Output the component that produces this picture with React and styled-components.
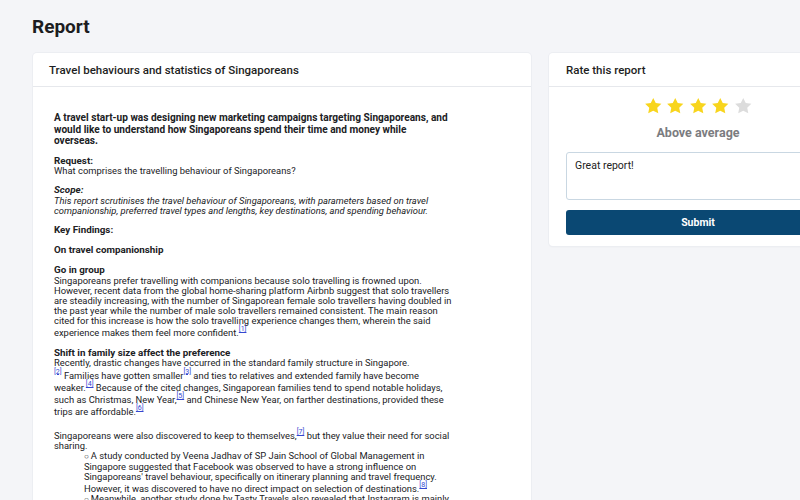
import React, { useState } from "react";
import styled, { createGlobalStyle } from "styled-components";

const GlobalStyle = createGlobalStyle`
  html, body {
    margin: 0;
    padding: 0;
    background: #f4f5f8;
    overflow: hidden;
  }
  body {
    font-family: Roboto, "Liberation Sans", Arial, sans-serif;
    color: #1d1e22;
  }
`;

const Page = styled.div`
  width: max-content;
  padding: 15px 33px 0;
`;

const Title = styled.h1`
  margin: 0 0 14px -1px;
  font-size: 19px;
  line-height: 24px;
  font-weight: 700;
  color: #1c1d21;
`;

const Columns = styled.div`
  display: grid;
  grid-template-columns: 498px 298px;
  gap: 18px;
  align-items: start;
`;

const Card = styled.section`
  background: #fff;
  border-radius: 4px;
  box-shadow: 0 0 0 1px #eceef2, 0 1px 2px rgba(20, 30, 60, 0.05);
`;

const CardHeader = styled.header`
  height: 34px;
  padding: 1px ${(p) => p.$pad || 16}px 0;
  box-sizing: border-box;
  display: flex;
  align-items: center;
  border-bottom: 1px solid #e6e8ec;
  font-size: 11.5px;
  font-weight: 500;
  color: #1d1e22;
`;

const ReportBody = styled.div`
  padding: 25px 21px 40px;
  font-size: 9.4px;
  line-height: 10px;
  color: #202124;
`;

const Content = styled.div`
  max-width: 430px;
  white-space: nowrap;
`;

const Lead = styled.p`
  margin: 0 0 9px;
  font-size: 10.1px;
  line-height: 11.6px;
  font-weight: 700;
`;

const Block = styled.div`
  margin: 0 0 ${(p) => p.$gap ?? 9}px;
`;

const Label = styled.div`
  font-weight: 700;
  font-size: 9.8px;
  line-height: 10.6px;
  font-style: ${(p) => (p.$italic ? "italic" : "normal")};
`;

const Text = styled.div`
  font-style: ${(p) => (p.$italic ? "italic" : "normal")};
`;

const Ref = styled.sup`
  font-size: 7px;
  line-height: 7px;
  vertical-align: 5.1px;
  color: #3347d1;
  text-decoration: underline;
  text-decoration-thickness: 0.5px;
`;

const SubList = styled.ul`
  list-style: none;
  margin: 0;
  padding: 0 0 0 30px;
`;

const SubItem = styled.li`
  &::before {
    content: "○ ";
    font-size: 8px;
  }
`;

const RateBody = styled.div`
  padding: 10px 17px 11px;
  display: flex;
  flex-direction: column;
  align-items: stretch;
`;

const Stars = styled.div`
  display: flex;
  justify-content: center;
  gap: 4px;
`;

const StarButton = styled.button`
  border: 0;
  background: none;
  padding: 0;
  width: 18.5px;
  height: 18px;
  cursor: pointer;
  color: ${(p) => (p.$on ? "#f8d51d" : "#dcdcdc")};
  svg {
    display: block;
    width: 18.5px;
    height: 18px;
  }
`;

const RatingLabel = styled.div`
  margin: 10px 0 12px;
  text-align: center;
  font-size: 12.5px;
  font-weight: 700;
  color: #7b7c80;
`;

const Feedback = styled.textarea`
  box-sizing: border-box;
  height: 48px;
  margin: 0;
  padding: 7px 8px;
  resize: none;
  border: 1px solid #c9d7e2;
  border-radius: 3px;
  font-family: Roboto, "Liberation Sans", Arial, sans-serif;
  font-size: 10.5px;
  line-height: 12px;
  color: #222;
  outline: none;
`;

const Submit = styled.button`
  margin-top: 10px;
  height: 25px;
  border: 0;
  border-radius: 3px;
  background: #0a4873;
  color: #fff;
  font-family: Roboto, "Liberation Sans", Arial, sans-serif;
  font-size: 10.5px;
  font-weight: 700;
  cursor: pointer;
`;

const Star = () => (
  <svg viewBox="0 0 24 24" aria-hidden="true">
    <path
      fill="currentColor"
      d="M12 1.2l3.3 6.9 7.5 1-5.5 5.2 1.4 7.5L12 18.2l-6.7 3.6 1.4-7.5L1.2 9.1l7.5-1z"
    />
  </svg>
);

// keeps the line breaks of the original report layout
const Lines = ({ children }) =>
  React.Children.toArray(children).flatMap((line, i) =>
    i === 0 ? [line] : [<br key={`br${i}`} />, line]
  );

const labels = ["Poor", "Below average", "Average", "Above average", "Excellent"];

export default function App() {
  const [rating, setRating] = useState(4);
  const [comment, setComment] = useState("Great report!");

  return (
    <>
      <GlobalStyle />
      <Page>
        <Title>Report</Title>
        <Columns>
          <Card>
            <CardHeader>Travel behaviours and statistics of Singaporeans</CardHeader>
            <ReportBody>
              <Content>
                <Lead>
                  <Lines>
                    <span>A travel start-up was designing new marketing campaigns targeting Singaporeans, and</span>
                    <span>would like to understand how Singaporeans spend their time and money while</span>
                    <span>overseas.</span>
                  </Lines>
                </Lead>
                <Block>
                  <Label>Request:</Label>
                  <Text>What comprises the travelling behaviour of Singaporeans?</Text>
                </Block>
                <Block>
                  <Label $italic>Scope:</Label>
                  <Text $italic>
                    <Lines>
                      <span>This report scrutinises the travel behaviour of Singaporeans, with parameters based on travel</span>
                      <span>companionship, preferred travel types and lengths, key destinations, and spending behaviour.</span>
                    </Lines>
                  </Text>
                </Block>
                <Block>
                  <Label>Key Findings:</Label>
                </Block>
                <Block $gap={10}>
                  <Label>On travel companionship</Label>
                </Block>
                <Block $gap={10}>
                  <Label>Go in group</Label>
                  <Text>
                    <Lines>
                      <span>Singaporeans prefer travelling with companions because solo travelling is frowned upon.</span>
                      <span>However, recent data from the global home-sharing platform Airbnb suggest that solo travellers</span>
                      <span>are steadily increasing, with the number of Singaporean female solo travellers having doubled in</span>
                      <span>the past year while the number of male solo travellers remained consistent. The main reason</span>
                      <span>cited for this increase is how the solo travelling experience changes them, wherein the said</span>
                      <span>
                        experience makes them feel more confident.<Ref>[1]</Ref>
                      </span>
                    </Lines>
                  </Text>
                </Block>
                <Block $gap={12}>
                  <Label>Shift in family size affect the preference</Label>
                  <Text>
                    <Lines>
                      <span>Recently, drastic changes have occurred in the standard family structure in Singapore.</span>
                      <span>
                        <Ref>[2]</Ref> Families have gotten smaller<Ref>[3]</Ref> and ties to relatives and extended
                        family have become
                      </span>
                      <span>
                        weaker.<Ref>[4]</Ref> Because of the cited changes, Singaporean families tend to spend notable
                        holidays,
                      </span>
                      <span>
                        such as Christmas, New Year,<Ref>[5]</Ref> and Chinese New Year, on farther destinations,
                        provided these
                      </span>
                      <span>
                        trips are affordable.<Ref>[6]</Ref>
                      </span>
                    </Lines>
                  </Text>
                </Block>
                <Block>
                  <Text>
                    <Lines>
                      <span>
                        Singaporeans were also discovered to keep to themselves,<Ref>[7]</Ref> but they value their need
                        for social
                      </span>
                      <span>sharing.</span>
                    </Lines>
                  </Text>
                  <SubList>
                    <SubItem>
                      <Lines>
                        <span>A study conducted by Veena Jadhav of SP Jain School of Global Management in</span>
                        <span>Singapore suggested that Facebook was observed to have a strong influence on</span>
                        <span>Singaporeans' travel behaviour, specifically on itinerary planning and travel frequency.</span>
                        <span>
                          However, it was discovered to have no direct impact on selection of destinations.<Ref>[8]</Ref>
                        </span>
                      </Lines>
                    </SubItem>
                    <SubItem>
                      <Lines>
                        <span>Meanwhile, another study done by Tasty Travels also revealed that Instagram is mainly</span>
                        <span>used by Singaporeans to share their travel experiences.</span>
                      </Lines>
                    </SubItem>
                  </SubList>
                </Block>
              </Content>
            </ReportBody>
          </Card>

          <Card>
            <CardHeader $pad={17}>Rate this report</CardHeader>
            <RateBody>
              <Stars>
                {[1, 2, 3, 4, 5].map((n) => (
                  <StarButton
                    key={n}
                    type="button"
                    $on={n <= rating}
                    onClick={() => setRating(n)}
                    aria-label={`${n} star`}
                  >
                    <Star />
                  </StarButton>
                ))}
              </Stars>
              <RatingLabel>{labels[rating - 1]}</RatingLabel>
              <Feedback value={comment} onChange={(e) => setComment(e.target.value)} />
              <Submit type="button">Submit</Submit>
            </RateBody>
          </Card>
        </Columns>
      </Page>
    </>
  );
}
